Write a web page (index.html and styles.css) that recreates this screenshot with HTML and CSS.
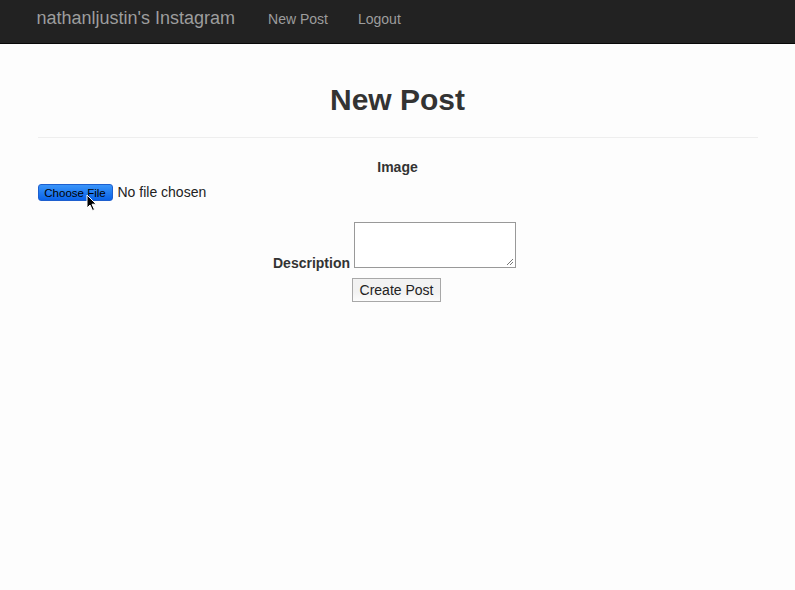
FILE: index.html
```html
<!DOCTYPE html>
<html>
<head>
<meta charset="utf-8">
<link rel="stylesheet" href="styles.css">
</head>
<body>
<nav class="navbar">
  <div class="container nav-inner">
    <a class="brand">nathanljustin's Instagram</a>
    <a class="nav-link">New Post</a>
    <a class="nav-link">Logout</a>
  </div>
</nav>
<main class="container">
  <h1 class="page-header">New Post</h1>
  <form class="post-form">
    <div class="field-image">
      <label class="label">Image</label>
      <div class="file-input">
        <span class="file-btn">Choose File
          <svg class="cursor" width="12" height="18" viewBox="0 0 12 18"><path d="M1 1 L1 14 L4 11 L6.5 16.5 L8.5 15.6 L6 10.2 L10.2 10.2 Z" fill="#000" stroke="#fff" stroke-width="1"/></svg>
        </span>
        <span class="file-text">No file chosen</span>
      </div>
    </div>
    <div class="field-desc">
      <label class="label">Description</label>
      <span class="textarea"><svg class="grip" width="8" height="8" viewBox="0 0 8 8"><path d="M7 1 L1 7 M7 4 L4 7" stroke="#777" stroke-width="1"/></svg></span>
    </div>
    <div class="actions">
      <span class="submit">Create Post</span>
    </div>
  </form>
</main>
</body>
</html>
```
FILE: styles.css
```css
* { box-sizing: border-box; }
body {
  margin: 0;
  background: #fdfdfd;
  font-family: "Liberation Sans", Arial, sans-serif;
  font-size: 14px;
  color: #333;
}
.container {
  width: 750px;
  margin: 0 auto;
  padding: 0 15px;
}
.navbar {
  background: #222;
  height: 44px;
  border-bottom: 1px solid #080808;
}
.nav-inner {
  display: flex;
  align-items: center;
  height: 43px;
  padding-left: 14px;
}
.brand {
  font-size: 18px;
  color: #9d9d9d;
  margin-right: 33px;
  padding-bottom: 7px;
}
.nav-link {
  font-size: 14px;
  color: #9d9d9d;
  margin-right: 30px;
  padding-bottom: 6px;
}
.page-header {
  margin: 38px 0 0;
  padding-bottom: 19px;
  border-bottom: 1px solid #eee;
  text-align: center;
  font-size: 30px;
  font-weight: 700;
  line-height: 36px;
  color: #333;
}
.post-form {
  padding-top: 20px;
}
.field-image .label {
  display: block;
  text-align: center;
  font-weight: 700;
  line-height: 18px;
}
.file-input {
  display: flex;
  align-items: center;
  margin-top: 6px;
  height: 20px;
}
.file-btn {
  position: relative;
  display: inline-block;
  width: 75px;
  height: 17px;
  background: linear-gradient(#3a95f9, #0a62e8);
  border-radius: 3px;
  border: 1px solid #1d5fcf;
  font-size: 11.5px;
  line-height: 16px;
  text-align: center;
  color: #000;
}
.cursor {
  position: absolute;
  left: 47px;
  top: 9px;
}
.file-text {
  margin-left: 5px;
  line-height: 16px;
  color: #222;
}
.field-desc {
  display: flex;
  justify-content: center;
  align-items: flex-end;
  margin-top: 20px;
  padding-right: 6px;
}
.field-desc .label {
  font-weight: 700;
  margin-right: 4px;
  line-height: 16px;
  margin-bottom: -3px;
}
.textarea {
  position: relative;
  display: block;
  width: 162px;
  height: 46px;
  border: 1px solid #999;
  background: #fff;
}
.grip {
  position: absolute;
  right: 1px;
  bottom: 1px;
}
.actions {
  display: flex;
  justify-content: center;
  margin-top: 10px;
  padding-right: 2px;
}
.submit {
  display: inline-block;
  width: 89px;
  height: 24px;
  border: 1px solid #a8a8a8;
  background: linear-gradient(#f2f2f2 60%, #fcfcfc);
  font-size: 14px;
  line-height: 22px;
  text-align: center;
  color: #222;
}
```
